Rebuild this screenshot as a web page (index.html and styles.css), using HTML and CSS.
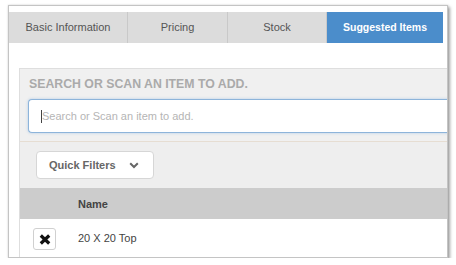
FILE: index.html
```html
<!DOCTYPE html>
<html lang="en">
<head>
    <meta charset="UTF-8">
    <title>Item - Suggested Items</title>
    <link rel="stylesheet" href="styles.css">
</head>
<body>
    <div class="frame">
        <!-- Tabs -->
        <div class="tabs">
            <div class="tab tab-basic">Basic Information</div>
            <div class="tab tab-pricing">Pricing</div>
            <div class="tab tab-stock">Stock</div>
            <div class="tab tab-suggested active">Suggested Items</div>
        </div>
        <div class="content">
            <div class="panel">
                <div class="panel-head">
                    <div class="panel-title">Search or scan an item to add.</div>
                    <div class="search-box">
                        <span class="caret"></span>
                        <span class="placeholder">Search or Scan an item to add.</span>
                    </div>
                </div>
                <div class="filters">
                    <button class="btn-filters">
                        Quick Filters
                        <svg width="10" height="7" viewBox="0 0 10 7">
                            <polyline points="1.2,1.2 5,5 8.8,1.2" fill="none" stroke="#666" stroke-width="2"/>
                        </svg>
                    </button>
                </div>
                <div class="table-head">
                    <div class="cell-action"></div>
                    <div class="cell-name">Name</div>
                </div>
                <div class="table-row">
                    <div class="cell-action">
                        <button class="btn-remove">
                            <svg width="12" height="11" viewBox="0 0 12 11">
                                <path d="M1.8 1.5 L10.2 9.5 M10.2 1.5 L1.8 9.5" stroke="#111" stroke-width="3.2"/>
                            </svg>
                        </button>
                    </div>
                    <div class="cell-name">20 X 20 Top</div>
                </div>
            </div>
        </div>
    </div>
</body>
</html>
```

FILE: styles.css
```css
body {
    margin: 0;
    padding: 0;
    background-color: #ffffff;
    font-family: "Liberation Sans", Arial, sans-serif;
}
.frame {
    margin: 5px 0 0 8px;
    width: 438px;
    height: 251px;
    border: 1px solid #c4c4c4;
    background: #ffffff;
    box-shadow: 2px 2px 3px rgba(0, 0, 0, 0.35), 0 0 2px rgba(0, 0, 0, 0.15);
    overflow: hidden;
}
.tabs {
    display: flex;
    margin-top: 6px;
    height: 31px;
}
.tab {
    display: flex;
    align-items: center;
    justify-content: center;
    padding-bottom: 1px;
    background-color: #dcdcdc;
    border-right: 1px solid #c9c9c9;
    color: #555;
    font-size: 11px;
}
.tab-basic {
    width: 118px;
}
.tab-pricing {
    width: 99px;
}
.tab-stock {
    width: 98px;
}
.tab-suggested {
    width: 116px;
    border-right: none;
}
.tab.active {
    background-color: #4b8dcb;
    color: #ffffff;
    font-weight: bold;
    font-size: 10.5px;
}
.content {
    padding: 25px 0 0 10px;
}
.panel {
    width: 460px;
    border: 1px solid #dedede;
    border-right: none;
    border-bottom: none;
    background-color: #f0f0f0;
}
.panel-head {
    padding: 7px 0 8px 8px;
    border-bottom: 1px solid #e6ddd2;
}
.panel-title {
    padding-left: 1px;
    height: 16px;
    line-height: 16px;
    font-size: 12.3px;
    font-weight: bold;
    color: #aaaaaa;
    text-transform: uppercase;
}
.search-box {
    display: flex;
    align-items: center;
    margin-top: 7px;
    height: 32px;
    padding-left: 12px;
    border: 1px solid #8db4da;
    border-right: none;
    border-radius: 4px 0 0 4px;
    background: #ffffff;
    box-shadow: 0 0 3px rgba(102, 160, 220, 0.45);
}
.caret {
    width: 1px;
    height: 13px;
    background: #444;
}
.placeholder {
    font-size: 11px;
    color: #b5b5b5;
}
.filters {
    padding: 9px 0 9px 16px;
    background-color: #eeeeee;
}
.btn-filters {
    display: flex;
    align-items: center;
    gap: 13px;
    width: 118px;
    height: 28px;
    padding: 0 0 0 12px;
    border: 1px solid #d6d6d6;
    border-radius: 4px;
    background: #ffffff;
    font-family: inherit;
    font-size: 11px;
    font-weight: bold;
    color: #666;
}
.table-head,
.table-row {
    display: flex;
    align-items: center;
}
.table-head {
    height: 31px;
    background-color: #cccccc;
    font-size: 11px;
    font-weight: bold;
    color: #444;
}
.table-row {
    height: 38px;
    background-color: #ffffff;
    font-size: 11px;
    color: #444;
}
.cell-action {
    width: 58px;
    padding-left: 13px;
    box-sizing: border-box;
}
.btn-remove {
    display: flex;
    align-items: center;
    justify-content: center;
    width: 23px;
    height: 22px;
    padding: 0;
    margin-top: 2px;
    border: 1px solid #d0d0d0;
    border-radius: 3px;
    background: #ffffff;
}
```
